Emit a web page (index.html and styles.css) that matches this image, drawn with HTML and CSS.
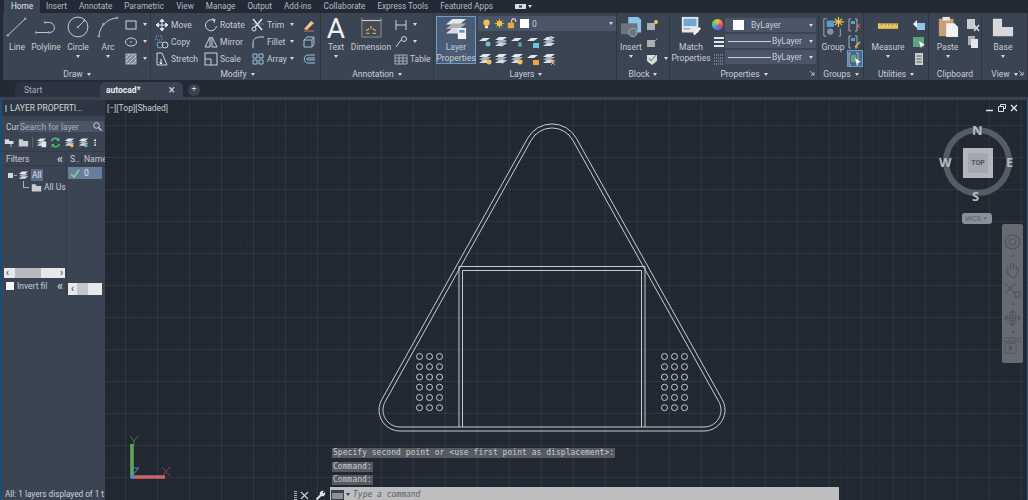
FILE: index.html
```html
<!DOCTYPE html>
<html lang="en">
<head>
<meta charset="utf-8">
<title>AutoCAD</title>
<link rel="stylesheet" href="styles.css">
</head>
<body>
<svg class="sprite" aria-hidden="true">
  <symbol id="stack" viewBox="0 0 14 14"><path d="M1 5 5 2h8L9 5z" fill="#e4e6e8"/><path d="M1 8 5 5h8L9 8z" fill="#aab0b8"/><path d="M1 11 5 8h8L9 11z" fill="#d8dade"/></symbol>
  <symbol id="sheet" viewBox="0 0 14 14"><path d="M1 6 5 3h7L8 6z" fill="#e4e6e8"/></symbol>
  <symbol id="pen" viewBox="0 0 14 14"><path d="M2 11 9 3l3 2-7 7z" fill="#e8c98a"/><path d="M2 13h10" stroke="#e06a5a"/></symbol>
</svg>
<div class="app">
  <nav class="menu">
    <span class="menu-item active">Home</span><span class="menu-item">Insert</span><span class="menu-item">Annotate</span><span class="menu-item">Parametric</span><span class="menu-item">View</span><span class="menu-item">Manage</span><span class="menu-item">Output</span><span class="menu-item">Add-ins</span><span class="menu-item">Collaborate</span><span class="menu-item">Express Tools</span><span class="menu-item">Featured Apps</span>
    <span class="menu-video"><svg width="11" height="5" viewBox="0 0 11 5"><rect width="11" height="5" fill="#d9dce0"/><rect x="4" y="1.500" width="3" height="2" fill="#333"/></svg><i class="caret"></i></span>
  </nav>

  <div class="ribbon">
    <section class="panel p-draw">
      <div class="panel-body">
        <div class="tool w26"><svg class="big" viewBox="0 0 24 24"><path d="M2 21 21 3" stroke="#cfd4da" fill="none"/><circle cx="2" cy="21" r="1.300" fill="#6fb1e0"/><circle cx="21" cy="3" r="1.300" fill="#6fb1e0"/></svg><span>Line</span></div>
        <div class="tool w32"><svg class="big" viewBox="0 0 24 24"><path d="M1 18H16C23 18 23 7 15 7H11" stroke="#cfd4da" fill="none"/><circle cx="1" cy="18" r="1.300" fill="#6fb1e0"/><circle cx="15" cy="18" r="1.300" fill="#6fb1e0"/><circle cx="11" cy="7" r="1.300" fill="#6fb1e0"/></svg><span>Polyline</span></div>
        <div class="tool w32"><svg class="big" viewBox="0 0 24 24"><circle cx="12" cy="12" r="10.800" stroke="#cfd4da" fill="none"/><path d="M12 12 19 5" stroke="#cfd4da"/><circle cx="12" cy="12" r="1.300" fill="#6fb1e0"/><circle cx="19" cy="5" r="1.300" fill="#6fb1e0"/></svg><span>Circle</span><i class="caret"></i></div>
        <div class="tool w28"><svg class="big" viewBox="0 0 24 24"><path d="M2 22C3 11 11 3 22 2" stroke="#cfd4da" fill="none"/><circle cx="2" cy="22" r="1.300" fill="#6fb1e0"/><circle cx="7" cy="9" r="1.300" fill="#6fb1e0"/><circle cx="22" cy="2" r="1.300" fill="#6fb1e0"/></svg><span>Arc</span><i class="caret"></i></div>
        <div class="col col-shapes">
          <div class="st"><svg class="ic" viewBox="0 0 14 14"><rect x="2" y="3" width="10" height="8" fill="none" stroke="#cfd4da"/></svg><i class="caret"></i></div>
          <div class="st"><svg class="ic" viewBox="0 0 14 14"><ellipse cx="7" cy="7" rx="5.500" ry="4" fill="none" stroke="#cfd4da"/><circle cx="7" cy="7" r="1" fill="#6fb1e0"/></svg><i class="caret"></i></div>
          <div class="st"><svg class="ic" viewBox="0 0 14 14"><rect x="2" y="2" width="10" height="10" fill="#7d8794" stroke="#aeb4bc"/><path d="M2 6 6 2M2 10 10 2M4 12 12 4M8 12l4-4" stroke="#dfe2e6" stroke-width=".7"/></svg><i class="caret"></i></div>
        </div>
      </div>
      <h3 class="panel-title">Draw <i class="caret"></i></h3>
    </section>

    <section class="panel p-modify">
      <div class="panel-body">
        <div class="col w49">
          <div class="st"><svg class="ic" viewBox="0 0 14 14"><path d="M7 1v12M1 7h12M7 1 5 3.500h4zM7 13l-2-2.500h4zM1 7l2.500-2v4zM13 7l-2.500-2v4z" stroke="#e2e5e8" fill="#e2e5e8"/></svg><span>Move</span></div>
          <div class="st"><svg class="ic" viewBox="0 0 14 14"><rect x="1" y="1" width="6" height="4" fill="none" stroke="#9aa2ac" stroke-dasharray="1 1"/><circle cx="5" cy="10" r="3" fill="none" stroke="#6fb1e0"/><circle cx="10" cy="10" r="3" fill="none" stroke="#cfd4da"/></svg><span>Copy</span></div>
          <div class="st"><svg class="ic" viewBox="0 0 14 14"><path d="M2 13V1h5l5 12z" fill="none" stroke="#cfd4da"/><path d="M6 7v5M4.500 10.500 6 12l1.500-1.500" stroke="#fff" fill="none"/></svg><span>Stretch</span></div>
        </div>
        <div class="col w47">
          <div class="st"><svg class="ic" viewBox="0 0 14 14"><path d="M10.500 3A5.500 5.500 0 1 0 12.500 8" fill="none" stroke="#cfd4da"/><path d="M8 1l3 .5L10 5" fill="none" stroke="#cfd4da"/></svg><span>Rotate</span></div>
          <div class="st"><svg class="ic" viewBox="0 0 14 14"><path d="M6 2 1 12h5zM8 2l5 10H8z" fill="none" stroke="#cfd4da"/></svg><span>Mirror</span></div>
          <div class="st"><svg class="ic" viewBox="0 0 14 14"><rect x="1" y="1" width="12" height="12" fill="none" stroke="#cfd4da"/><path d="M1 7h6v6" fill="none" stroke="#cfd4da"/></svg><span>Scale</span></div>
        </div>
        <div class="col w51">
          <div class="st"><svg class="ic" viewBox="0 0 14 14"><path d="M2 1 11 12M11 1 4 9" stroke="#e2e5e8" stroke-width="1.500"/><circle cx="3" cy="11" r="2" fill="none" stroke="#e2e5e8"/><path d="M1 6h12" stroke="#6fb1e0" stroke-width=".6"/></svg><span>Trim</span><i class="caret end"></i></div>
          <div class="st"><svg class="ic" viewBox="0 0 14 14"><path d="M2 13V8C2 4 5 2 9 2h4" fill="none" stroke="#cfd4da"/></svg><span>Fillet</span><i class="caret end"></i></div>
          <div class="st"><svg class="ic" viewBox="0 0 14 14"><path d="M2 2h4v4H2zM8 2h4v4H8zM2 8h4v4H2zM8 8h4v4H8z" fill="none" stroke="#9dc3e2"/></svg><span>Array</span><i class="caret end"></i></div>
        </div>
        <div class="col">
          <div class="st"><svg class="ic" viewBox="0 0 14 14"><use href="#pen"/></svg></div>
          <div class="st"><svg class="ic" viewBox="0 0 14 14"><path d="M2 5h8v7H2zM2 5l3-3h7v7l-2 3M10 5l2-3" fill="none" stroke="#9dc3e2"/></svg></div>
          <div class="st"><svg class="ic" viewBox="0 0 14 14"><path d="M13 3H6C1 3 1 11 6 11h7M13 6H6c-2 0-2 2 0 2h7" fill="none" stroke="#9dc3e2"/></svg></div>
        </div>
      </div>
      <h3 class="panel-title">Modify <i class="caret"></i></h3>
    </section>

    <section class="panel p-annotation">
      <div class="panel-body">
        <div class="tool w30"><b class="text-glyph">A</b><span>Text</span><i class="caret"></i></div>
        <div class="tool w40"><svg class="big" viewBox="0 0 24 24"><path d="M2 2v21h21V2" fill="#454c56" stroke="#8e949c"/><path d="M2 5h21" stroke="#e4e6e8"/><path d="M7 16l3-2M12 14v-3M17 16l-3-2M7 19h3M14 19h3" stroke="#e8b94a" stroke-width="1.300"/></svg><span>Dimension</span></div>
        <div class="col col-annot">
          <div class="st"><svg class="ic" viewBox="0 0 14 14"><path d="M2 2v10M12 2v10M2 7h10" stroke="#cfd4da" fill="none"/></svg><i class="caret"></i></div>
          <div class="st"><svg class="ic" viewBox="0 0 14 14"><path d="M2 12 7 5" stroke="#cfd4da"/><circle cx="10" cy="4" r="2.500" fill="none" stroke="#cfd4da"/></svg><i class="caret"></i></div>
          <div class="st"><svg class="ic" viewBox="0 0 14 14"><path d="M1 3h12v9H1zM1 6h12M1 9h12M5 3v9M9 3v9" fill="none" stroke="#aab0b8"/></svg><span>Table</span></div>
        </div>
      </div>
      <h3 class="panel-title">Annotation <i class="caret"></i></h3>
    </section>

    <section class="panel p-layers">
      <div class="panel-body">
        <div class="tool lp"><svg class="big" viewBox="0 0 24 24"><path d="M1 7 8 1h15l-7 6z" fill="#e4e6e8"/><path d="M1 12 8 6h15l-7 6z" fill="#aab0b8"/><path d="M1 17l7-6h15l-7 6z" fill="#d8dade"/><rect x="14" y="11" width="9" height="12" fill="#f2f3f4"/><rect x="15.500" y="13" width="6" height="3" fill="#5a9bd0"/></svg><span>Layer</span><span>Properties</span></div>
        <div class="layer-tools">
          <div class="combo c-layer">
            <svg class="ic" viewBox="0 0 14 14"><circle cx="7" cy="6" r="4" fill="#f2c14e"/><rect x="5" y="10" width="4" height="3" fill="#e8e8e8"/></svg>
            <svg class="ic" viewBox="0 0 14 14"><circle cx="7" cy="7" r="3.500" fill="#f2c14e"/><path d="M7 1v12M1 7h12M3 3l8 8M11 3l-8 8" stroke="#f2c14e"/></svg>
            <svg class="ic" viewBox="0 0 14 14"><rect x="1" y="6" width="8" height="7" fill="#eba63c"/><path d="M6 6V3.500a2.500 2.500 0 0 1 5 0V5" fill="none" stroke="#f2f2f2" stroke-width="1.300"/></svg>
            <i class="swatch"></i><span>0</span><i class="caret end"></i>
          </div>
          <div class="icon-row">
            <svg class="ic" viewBox="0 0 14 14"><use href="#sheet"/><circle cx="10" cy="9" r="2.500" fill="#6bc6d8"/></svg>
            <svg class="ic" viewBox="0 0 14 14"><use href="#stack"/><path d="M7 12l5-6" stroke="#6fb1e0"/></svg>
            <svg class="ic" viewBox="0 0 14 14"><use href="#sheet"/><path d="M10 7v5M8 8l4 3M12 8l-4 3" stroke="#6bc6d8"/></svg>
            <svg class="ic" viewBox="0 0 14 14"><use href="#sheet"/><rect x="7" y="8" width="6" height="5" fill="#6bc6d8"/></svg>
            <svg class="ic" viewBox="0 0 14 14"><use href="#stack"/><circle cx="9" cy="3" r="2" fill="#9dc3e2"/></svg>
          </div>
          <div class="icon-row">
            <svg class="ic" viewBox="0 0 14 14"><use href="#stack"/><circle cx="11" cy="10" r="2.500" fill="#f2c14e"/></svg>
            <svg class="ic" viewBox="0 0 14 14"><use href="#stack"/><path d="M8 12l5-4" stroke="#6fb1e0"/></svg>
            <svg class="ic" viewBox="0 0 14 14"><use href="#stack"/><circle cx="10" cy="10" r="2.500" fill="#f2c14e"/></svg>
            <svg class="ic" viewBox="0 0 14 14"><use href="#sheet"/><rect x="7" y="8" width="6" height="5" fill="#eba63c"/></svg>
            <svg class="ic" viewBox="0 0 14 14"><use href="#stack"/><path d="M9 9l4 4M13 9l-4 4" stroke="#eba63c"/></svg>
          </div>
        </div>
      </div>
      <h3 class="panel-title">Layers <i class="caret"></i></h3>
    </section>

    <section class="panel p-block">
      <div class="panel-body">
        <div class="tool w28"><svg class="big" viewBox="0 0 24 24"><path d="M9 1h11l3 3v14H9z" fill="#8cc4ec"/><rect x="1" y="8" width="18" height="12" fill="#6d747e"/><circle cx="14" cy="18" r="4.500" fill="#6d747e" stroke="#aab0b8"/></svg><span>Insert</span><i class="caret"></i></div>
        <div class="col">
          <div class="st"><svg class="ic" viewBox="0 0 14 14"><rect x="2" y="5" width="8" height="7" fill="#aab0b8"/><circle cx="11" cy="4" r="2" fill="#f2c14e"/></svg></div>
          <div class="st"><svg class="ic" viewBox="0 0 14 14"><rect x="2" y="5" width="8" height="7" fill="#aab0b8"/><path d="M9 7l4-4" stroke="#e06a5a"/></svg></div>
          <div class="st"><svg class="ic" viewBox="0 0 14 14"><path d="M2 3h10v6l-5 4-5-4z" fill="#d8dade"/><path d="M4 6l2 3 5-6" stroke="#4a8f5a" fill="none"/></svg><i class="caret"></i></div>
        </div>
      </div>
      <h3 class="panel-title">Block <i class="caret"></i></h3>
    </section>

    <section class="panel p-props">
      <div class="panel-body">
        <div class="tool w42"><svg class="big" viewBox="0 0 24 24"><rect x="2" y="1" width="18" height="17" fill="#e4e6e8"/><rect x="4" y="3" width="14" height="8" fill="#6ea9d6"/><path d="M4 14h7" stroke="#888"/><path d="M14 19l7-7 2 2-7 7z" fill="#f2f2f2"/></svg><span>Match</span><span>Properties</span></div>
        <div class="col prop-icons">
          <div class="st"><i class="wheel"></i></div>
          <div class="st"><svg class="ic" viewBox="0 0 14 14"><path d="M2 3h10M2 7h10M2 11h10" stroke="#e2e5e8" stroke-width="2"/></svg></div>
          <div class="st"><svg class="ic" viewBox="0 0 14 14"><path d="M2 3h10M2 6h10M2 9h10M2 12h10" stroke="#aab0b8" stroke-dasharray="1 1"/></svg></div>
        </div>
        <div class="combos">
          <div class="combo c-prop"><i class="swatch wide"></i><span>ByLayer</span><i class="caret end"></i></div>
          <div class="combo c-prop"><i class="rule"></i><span>ByLayer</span><i class="caret end"></i></div>
          <div class="combo c-prop"><i class="rule"></i><span>ByLayer</span><i class="caret end"></i></div>
        </div>
      </div>
      <h3 class="panel-title">Properties <i class="caret"></i></h3>
      <svg class="launch" width="5" height="5" viewBox="0 0 5 5"><path d="M0 0l4 4M4 1v3H1" fill="none" stroke="#b4bac2"/></svg>
    </section>

    <section class="panel p-groups">
      <div class="panel-body">
        <div class="tool w28"><svg class="big" viewBox="0 0 24 24"><path d="M5 3H2v19h3M18 22h2v-8" fill="none" stroke="#aab0b8"/><rect x="5" y="5" width="8" height="7" fill="#5a9bd0"/><circle cx="9" cy="17" r="3.500" fill="#8a9099"/><path d="M18 1v11M13 6.500h11M14 3l8 7M22 3l-8 7" stroke="#f2c14e" stroke-width="1.300"/></svg><span>Group</span></div>
        <div class="col">
          <div class="st"><svg class="ic" viewBox="0 0 14 14"><path d="M4 1H2v12h2M8 1h2v12H8" fill="none" stroke="#aab0b8"/><rect x="4" y="3" width="4" height="3" fill="#5a9bd0"/><path d="M9 6l4 4M13 6l-4 4" stroke="#e06a5a"/></svg></div>
          <div class="st"><svg class="ic" viewBox="0 0 14 14"><path d="M4 1H2v12h2M8 1h2v12H8" fill="none" stroke="#aab0b8"/><rect x="4" y="3" width="4" height="3" fill="#5a9bd0"/><path d="M8 12l5-5" stroke="#e8b94a" stroke-width="1.500"/></svg></div>
          <div class="st sel"><svg class="ic" viewBox="0 0 14 14"><path d="M3 1H1v12h2M8 1h2v12H8" fill="none" stroke="#aab0b8"/><rect x="3" y="3" width="5" height="7" fill="#5fa27c"/><path d="M7 6l6 4-3 .5-1 3z" fill="#fff"/></svg></div>
        </div>
      </div>
      <h3 class="panel-title">Groups <i class="caret"></i></h3>
    </section>

    <section class="panel p-util">
      <div class="panel-body">
        <div class="tool w48"><svg class="big" viewBox="0 0 24 24"><rect x="1" y="8" width="22" height="6" fill="#e8c265"/><path d="M5 8v2M9 8v2M13 8v2M17 8v2M21 8v2" stroke="#8a6d2a"/></svg><span>Measure</span><i class="caret"></i></div>
        <div class="col">
          <div class="st"><svg class="ic" viewBox="0 0 14 14"><rect x="5" y="5" width="8" height="7" fill="#8cc4ec"/><path d="M1 6l4-4v8z" fill="#f2f2f2"/></svg></div>
          <div class="st"><svg class="ic" viewBox="0 0 14 14"><rect x="1" y="2" width="11" height="10" fill="#5fa27c"/><path d="M7 6l6 4-3 .5-1 3z" fill="#fff"/></svg></div>
          <div class="st"><svg class="ic" viewBox="0 0 14 14"><rect x="3" y="1" width="8" height="12" fill="#c9ccd0"/><path d="M4.500 4h5M4.500 7h5M4.500 10h5" stroke="#555"/></svg></div>
        </div>
      </div>
      <h3 class="panel-title">Utilities <i class="caret"></i></h3>
    </section>

    <section class="panel p-clip">
      <div class="panel-body">
        <div class="tool w37"><svg class="big" viewBox="0 0 24 24"><rect x="2" y="3" width="16" height="19" fill="#c79f72"/><rect x="6" y="1" width="8" height="4" fill="#e6e8ea"/><path d="M10 8h9l4 4v11H10z" fill="#f1f2f3"/></svg><span>Paste</span><i class="caret"></i></div>
        <div class="col">
          <div class="st"><svg class="ic" viewBox="0 0 14 14"><rect x="1" y="1" width="8" height="10" fill="#c9ccd0"/><path d="M8 7l5 6M13 7l-5 6" stroke="#e2e5e8" stroke-width="1.300"/></svg></div>
          <div class="st"><svg class="ic" viewBox="0 0 14 14"><rect x="2" y="1" width="7" height="9" fill="#aab0b8"/><rect x="5" y="4" width="7" height="9" fill="#e4e6e8"/></svg></div>
        </div>
      </div>
      <h3 class="panel-title">Clipboard</h3>
    </section>

    <section class="panel p-view">
      <div class="panel-body">
        <div class="tool w42"><svg class="big" viewBox="0 0 24 24"><path d="M1 3h10v9h12v10H1z" fill="#d8d8d8"/></svg><span>Base</span><i class="caret"></i></div>
      </div>
      <h3 class="panel-title">View <i class="caret"></i></h3>
      <svg class="launch" width="5" height="5" viewBox="0 0 5 5"><path d="M0 0l4 4M4 1v3H1" fill="none" stroke="#b4bac2"/></svg>
    </section>
  </div>

  <div class="tabs">
    <span class="tab tab-start">Start</span>
    <span class="tab tab-active"><b>autocad*</b><em>×</em></span>
    <span class="tab-add">+</span>
  </div>

  <main class="workspace">
    <aside class="palette">
      <header class="pal-head"><i class="grip"></i>LAYER PROPERTI...</header>
      <div class="pal-search"><span>Cur</span><div class="search"><span>Search for layer</span><svg width="9" height="9" viewBox="0 0 9 9"><circle cx="3.500" cy="3.500" r="2.800" fill="none" stroke="#cfd4da"/><path d="M5.500 5.500 8.500 8.500" stroke="#cfd4da" stroke-width="1.300"/></svg></div></div>
      <div class="pal-tools">
        <svg class="ic" viewBox="0 0 14 14"><path d="M1 3h5l1 2h5v4H1z" fill="#d8dade"/><path d="M9 8v5" stroke="#d8dade"/></svg>
        <svg class="ic" viewBox="0 0 14 14"><path d="M1 3h5l1 2h6v7H1z" fill="#c9ccd0"/></svg>
        <i class="pal-sep"></i>
        <svg class="ic" viewBox="0 0 14 14"><use href="#stack"/><rect x="7" y="6" width="6" height="7" fill="#e4e6e8"/></svg>
        <svg class="ic" viewBox="0 0 14 14"><path d="M2 5a5 5 0 0 1 9-1M12 9a5 5 0 0 1-9 1" fill="none" stroke="#46c07a" stroke-width="2"/><path d="M12 1v4H8M2 13V9h4" fill="#46c07a"/></svg>
        <svg class="ic" viewBox="0 0 14 14"><use href="#stack"/><circle cx="10" cy="11" r="2.200" fill="#f2c14e"/></svg>
        <svg class="ic" viewBox="0 0 14 14"><use href="#stack"/><circle cx="10" cy="11" r="2.200" fill="#6fb1e0"/></svg>
        <svg class="ic clip" viewBox="0 0 4 14"><use href="#stack" width="14" height="14"/></svg>
      </div>
      <div class="panes">
        <div class="pane-filters">
          <div class="pane-head"><span>Filters</span><b>«</b></div>
          <div class="tree">
            <div class="tree-row"><i class="minus"></i><i class="dash"></i><svg class="ic small" viewBox="0 0 14 14"><use href="#stack"/></svg><span class="tree-sel">All</span></div>
            <div class="tree-row sub"><i class="elbow"></i><svg class="ic small" viewBox="0 0 14 14"><path d="M1 3h5l1 2h6v7H1z" fill="#c9ccd0"/></svg><span>All Use</span></div>
          </div>
          <div class="scroll"><span>‹</span><i></i><span>›</span></div>
          <div class="invert"><i class="check"></i><span>Invert fil</span><b>«</b></div>
        </div>
        <div class="pane-list">
          <div class="list-head"><span class="col-s">S..</span><span>Name</span></div>
          <div class="list-row"><svg width="10" height="9" viewBox="0 0 10 9"><path d="M1 5l3 3 5-7" fill="none" stroke="#6fdc8c" stroke-width="1.600"/></svg><span>0</span></div>
          <div class="scroll short"><span>‹</span><i></i></div>
        </div>
      </div>
      <footer class="pal-foot">All: 1 layers displayed of 1 t</footer>
    </aside>

    <section class="viewport">
      <svg class="drawing" viewBox="0 0 923 400" width="923" height="400" aria-hidden="true">
        <g transform="translate(-105 -100)" fill="none" stroke="#c8ccd1" stroke-width="1">
          <path d="M400 431H704A21 21 0 0 0 722.300 399.750L576.300 138.200A27.800 27.800 0 0 0 527.700 138.200L381.700 399.750A21 21 0 0 0 400 431Z"/>
          <path d="M400 427H704A17 17 0 0 0 718.840 401.700L572.800 140.200A23.800 23.800 0 0 0 531.200 140.200L385.160 401.700A17 17 0 0 0 400 427Z"/>
          <path d="M459 427V266.500H645V427M462.500 427V270.500H641.500V427"/>
          <g id="dots">
            <circle cx="419.500" cy="356.500" r="3"/><circle cx="429.500" cy="356.500" r="3"/><circle cx="439.500" cy="356.500" r="3"/>
            <circle cx="419.500" cy="366.700" r="3"/><circle cx="429.500" cy="366.700" r="3"/><circle cx="439.500" cy="366.700" r="3"/>
            <circle cx="419.500" cy="377" r="3"/><circle cx="429.500" cy="377" r="3"/><circle cx="439.500" cy="377" r="3"/>
            <circle cx="419.500" cy="387.200" r="3"/><circle cx="429.500" cy="387.200" r="3"/><circle cx="439.500" cy="387.200" r="3"/>
            <circle cx="419.500" cy="397.500" r="3"/><circle cx="429.500" cy="397.500" r="3"/><circle cx="439.500" cy="397.500" r="3"/>
            <circle cx="419.500" cy="407.700" r="3"/><circle cx="429.500" cy="407.700" r="3"/><circle cx="439.500" cy="407.700" r="3"/>
          </g>
          <use href="#dots" transform="translate(245 0)"/>
        </g>
        <g transform="translate(-105 -100)">
          <path d="M132 477V444" stroke="#62a85a" stroke-width="3.500"/>
          <path d="M132 477H165" stroke="#c9686a" stroke-width="3.500"/>
          <path d="M132 477 138 468M133 468h6" stroke="#3f8fd0" fill="none"/>
          <circle cx="132" cy="477" r="2" fill="#3f8fd0"/>
          <path d="M130 436l4 5 4-5M134 441v5" stroke="#3f7a3e" fill="none"/>
          <path d="M162 467l8 9M170 467l-8 9" stroke="#8a3f40"/>
        </g>
      </svg>

      <span class="vp-label">[−][Top][Shaded]</span>
      <div class="win-ctrl">
        <svg width="8" height="8" viewBox="0 0 8 8"><path d="M0 6.500h7" stroke="#dfe2e6" stroke-width="1.500"/></svg>
        <svg width="8" height="8" viewBox="0 0 8 8"><path d="M2.500 2.500V.5h5v4h-2M.5 2.500h5v5h-5z" fill="none" stroke="#dfe2e6"/></svg>
        <svg width="8" height="8" viewBox="0 0 8 8"><path d="M1 1l6 6M7 1 1 7" stroke="#dfe2e6" stroke-width="1.400"/></svg>
      </div>

      <div class="viewcube">
        <i class="ring"></i>
        <b class="dir n">N</b><b class="dir s">S</b><b class="dir w">W</b><b class="dir e">E</b>
        <div class="cube"><span>TOP</span></div>
      </div>
      <div class="wcs">WCS <i class="caret"></i></div>

      <div class="navbar">
        <svg class="nav-ic" viewBox="0 0 20 18"><circle cx="10" cy="9" r="7.500" fill="none" stroke="#50555b" stroke-width="1.500"/><circle cx="10" cy="9" r="3.500" fill="none" stroke="#50555b"/></svg>
        <i class="nav-dot"></i>
        <svg class="nav-ic" viewBox="0 0 20 18"><path d="M5 9V5M8 8V2M11 8V2M14 9V4M5 9c0 4 2 7 5 8 4 0 6-4 6-10M2 10l3 2" fill="none" stroke="#50555b" stroke-width="1.200"/></svg>
        <svg class="nav-ic tight" viewBox="0 0 20 18"><path d="M2 2 13 13M13 2 2 13" stroke="#50555b" stroke-width="1.200"/><circle cx="15" cy="14" r="3" fill="none" stroke="#50555b" stroke-width="1.200"/></svg>
        <i class="nav-dot"></i>
        <svg class="nav-ic" viewBox="0 0 20 18"><path d="M10 1v16M2 9h16M7 4l3-3 3 3M7 14l3 3 3-3M5 6 2 9l3 3M15 6l3 3-3 3" fill="none" stroke="#50555b" stroke-width="1.200"/><rect x="7" y="6" width="6" height="6" fill="none" stroke="#50555b"/></svg>
        <i class="nav-dot"></i>
        <svg class="nav-ic" viewBox="0 0 20 20"><path d="M1 1h5v4H1zM8 1h5v4H8zM15 1h4v4h-4zM2 7h12v11H2z" fill="none" stroke="#50555b"/><path d="M6 9l5 3.500L6 16z" fill="#50555b"/></svg>
      </div>

      <div class="cmd-history">
        <p>Specify second point or &lt;use first point as displacement&gt;:</p>
        <p>Command:</p>
        <p>Command:</p>
      </div>
      <div class="cmd-bar">
        <div class="cmd-tools">
          <i class="cmd-grip"></i>
          <svg width="9" height="9" viewBox="0 0 9 9"><path d="M1 1l7 7M8 1 1 8" stroke="#c9ccd0" stroke-width="1.200"/></svg>
          <svg class="wrench" width="11" height="11" viewBox="0 0 11 11"><path d="M1.500 9.500 6.500 4.500" stroke="#e2e5e8" stroke-width="2" fill="none"/><path d="M5 5a3 3 0 0 1 4-4L7.500 2.500 8.500 3.500 10 2a3 3 0 0 1-4 4z" fill="#e2e5e8"/></svg>
        </div>
        <div class="cmd-input">
          <svg width="13" height="10" viewBox="0 0 13 10"><rect x=".5" y=".5" width="12" height="9" fill="#8d9096" stroke="#3b4048"/><rect x="1" y="1" width="11" height="2" fill="#3b4048"/></svg>
          <i class="caret dark"></i>
          <span>Type a command</span>
        </div>
      </div>
    </section>
  </main>
</div>
</body>
</html>
```
FILE: styles.css
```css
* { box-sizing: border-box; }
html, body { margin: 0; height: 100%; overflow: hidden; }
body { font-family: Roboto, "Liberation Sans", sans-serif; font-size: 8.500px; color: #c9cdd3; background: #232a36; }
.sprite { display: none; }
.app { width: 1028px; height: 500px; display: flex; flex-direction: column; }
i, b, em { font-style: normal; }

.caret { display: inline-block; width: 0; height: 0; border-left: 2.500px solid transparent; border-right: 2.500px solid transparent; border-top: 3px solid #d5d8dc; }
.caret.dark { border-top-color: #3b4048; }
.caret.end { margin-left: auto; }

.menu { height: 13px; display: flex; align-items: stretch; padding-left: 4px; background: #232a36; font-size: 8.200px; }
.menu-item { padding: 0 6px; line-height: 13px; color: #b4bac2; white-space: nowrap; }
.menu-item.active { padding: 0 7px; background: #3b4453; color: #e4e7ea; }
.menu-video { display: flex; align-items: center; gap: 2px; margin-left: 16px; }

.ribbon { height: 67px; display: flex; background: #3b4453; border-left: 3px solid #232a36; padding-left: 1px; }
.panel { position: relative; display: flex; flex-direction: column; border-right: 1px solid #2f3744; flex: none; }
.panel-body { height: 54px; display: flex; padding-top: 3px; }
.panel-title { margin: 0; flex: 1; display: flex; align-items: center; justify-content: center; gap: 4px; font: inherit; color: #c9cdd3; padding-top: 1px; }
.launch { position: absolute; right: 3px; bottom: 4px; }

.p-draw { width: 147px; }
.p-modify { width: 170px; padding-left: 4px; }
.p-annotation { width: 113px; }
.p-layers { width: 183px; padding-left: 2px; }
.p-block { width: 53px; }
.p-props { width: 149px; }
.p-groups { width: 45px; }
.p-util { width: 65px; }
.p-clip { width: 53px; }
.p-view { width: 46px; }

.tool { display: flex; flex-direction: column; align-items: center; flex: none; line-height: 11px; }
.tool span { white-space: nowrap; }
.tool .caret { margin-top: 2px; }
.big { width: 22px; height: 22px; margin-bottom: 4px; display: block; flex: none; }
.text-glyph { height: 26px; font-size: 28px; line-height: 26px; font-weight: 400; color: #eef0f2; }
.w26 { width: 26px; } .w28 { width: 28px; } .w30 { width: 30px; } .w32 { width: 32px; } .w37 { width: 37px; } .w40 { width: 40px; } .w42 { width: 42px; }
.w47 { width: 47px; } .w48 { width: 48px; } .w49 { width: 49px; } .w51 { width: 51px; }

.col { display: flex; flex-direction: column; flex: none; }
.col-shapes { width: 26px; padding-left: 2px; }
.col-annot { padding-left: 3px; }
.st { height: 17px; display: flex; align-items: center; gap: 2px; white-space: nowrap; }
.st .caret { margin-left: 3px; }
.st .caret.end { margin-left: auto; margin-right: 8px; }
.st.sel { background: #4a6a8c; border: 1px solid #6a9ccc; }
.ic { width: 14px; height: 14px; flex: none; display: block; }
.ic.small { width: 11px; height: 11px; }
.ic.clip { width: 4px; }

.lp { width: 40px; height: 48px; background: #4a5c74; border: 1px solid #6a9ccc; margin-right: 2px; }
.lp .big { margin-bottom: 1px; height: 24px; }
.layer-tools { display: flex; flex-direction: column; width: 139px; }
.icon-row { height: 17px; display: flex; align-items: center; gap: 2px; }
.combo { display: flex; align-items: center; background: #4a5568; padding: 0 3px; }
.c-layer { height: 15px; gap: 2px; margin-bottom: 2px; }
.c-layer .ic { width: 11px; height: 11px; }
.c-layer .swatch { margin-right: 1px; }
.c-prop { height: 14px; width: 91px; margin-bottom: 2px; gap: 4px; }
.swatch { width: 9px; height: 9px; background: #fff; flex: none; display: block; }
.swatch.wide { width: 11px; height: 10px; margin: 0 3px 0 5px; }
.rule { width: 43px; height: 1px; margin-right: -3px; background: #cfd4da; flex: none; display: block; }
.combos { display: flex; flex-direction: column; padding-top: 2px; }
.prop-icons { width: 13px; }
.wheel { width: 11px; height: 11px; border-radius: 50%; display: block; background: conic-gradient(#e8c23c, #e88a3c, #d9487a, #8a5ad0, #4a8ad8, #4ac0a0, #8ad04a, #e8c23c); }

.tabs { height: 20px; display: flex; align-items: flex-end; padding-left: 15px; background: #232a36; border-bottom: 3px solid #3a4250; }
.tab { height: 15px; line-height: 15px; display: flex; align-items: center; justify-content: space-between; padding-top: 1px; }
.tab-start { width: 85px; background: #2b3340; padding-left: 9px; color: #a9afb8; border-top-left-radius: 6px; }
.tab-active { width: 83px; background: #3a4250; padding: 1px 8px 0 6px; border-radius: 5px 5px 0 0; }
.tab-active b { font-weight: 700; color: #e8eaec; }
.tab-active em { font-size: 12px; color: #d5d8dc; }
.tab-add { width: 12px; height: 12px; margin: 0 0 1px 5px; border-radius: 50%; background: #3a4250; text-align: center; line-height: 11px; color: #d5d8dc; }

.workspace { flex: 1; display: flex; min-height: 0; }
.palette { width: 105px; flex: none; display: flex; flex-direction: column; background: #3b4453; border-left: 2px solid #174f78; }
.pal-head { height: 16px; line-height: 16px; padding-left: 3px; background: #2e3643; color: #d5d8dc; display: flex; align-items: center; gap: 3px; white-space: nowrap; }
.grip { width: 2px; height: 7px; background: #7c8490; display: block; }
.pal-search { height: 18px; display: flex; align-items: center; padding: 3px 0 0 4px; overflow: hidden; }
.pal-search > span { width: 13px; flex: none; overflow: hidden; }
.search { flex: 1; height: 11px; margin-right: 1px; background: #4a5568; display: flex; align-items: center; justify-content: space-between; padding: 0 2px 0 1px; color: #a9afb8; }
.pal-tools { height: 17px; display: flex; align-items: center; gap: 3px; padding-left: 2px; overflow: hidden; }
.pal-tools .ic { width: 11px; height: 11px; }
.pal-tools .ic.clip { width: 4px; }
.pal-sep { width: 1px; height: 11px; background: #5a6372; display: block; flex: none; }
.panes { display: flex; height: 146px; }
.pane-filters { width: 65px; display: flex; flex-direction: column; border-right: 1px solid #333b48; flex: none; }
.pane-head { height: 15px; display: flex; justify-content: space-between; align-items: center; padding: 0 3px 0 4px; border-top: 1px solid #333b48; border-bottom: 1px solid #333b48; }
.pane-head b, .invert b { font-size: 12px; line-height: 10px; font-weight: 700; }
.tree { flex: 1; padding: 3px 0 0 6px; }
.tree-row { height: 12px; display: flex; align-items: center; gap: 1px; white-space: nowrap; overflow: hidden; }
.tree-row.sub { padding-left: 15px; gap: 2px; }
.tree-sel { background: #5a6b86; padding: 0 1px; margin-left: 1px; line-height: 12px; color: #dfe2e6; }
.minus { width: 5px; height: 5px; background: #d5d8dc; display: block; flex: none; }
.dash { width: 3px; height: 1px; background: #aab0b8; display: block; flex: none; }
.elbow { width: 6px; height: 8px; margin-top: -7px; border-left: 1px solid #aab0b8; border-bottom: 1px solid #aab0b8; display: block; flex: none; }
.scroll { height: 10px; display: flex; align-items: center; background: #e6e8ea; color: #333; margin: 0 1px 0 2px; padding: 0 2px; line-height: 10px; font-size: 10px; }
.scroll i { width: 26px; height: 10px; background: #b6babf; display: block; margin: 0 auto 0 6px; }
.scroll.short { margin: auto 0 2px 0; width: 34px; height: 12px; padding: 0 0 0 3px; }
.scroll.short i { width: 11px; height: 12px; margin: 0 0 0 3px; background: #c4c8cc; }
.invert { height: 16px; margin-bottom: 3px; display: flex; align-items: center; gap: 3px; padding: 0 3px 0 4px; white-space: nowrap; }
.invert b { margin-left: auto; }
.check { width: 8px; height: 8px; background: #f4f5f6; display: block; flex: none; }
.pane-list { flex: 1; display: flex; flex-direction: column; min-width: 0; overflow: hidden; padding-left: 1px; }
.list-head { height: 15px; display: flex; align-items: center; white-space: nowrap; border-top: 1px solid #333b48; border-bottom: 1px solid #333b48; overflow: hidden; }
.col-s { width: 14px; padding-left: 2px; border-right: 1px solid #333b48; margin-right: 2px; flex: none; }
.list-row { width: 34px; height: 12px; margin-top: 1px; background: #6a7d9c; display: flex; align-items: center; gap: 4px; padding-left: 2px; color: #e4e7ea; }
.pal-foot { margin-top: auto; height: 13px; padding: 1px 0 0 3px; font-size: 8.200px; line-height: 12px; white-space: nowrap; overflow: hidden; color: #d0d4d9; }

.viewport {
  position: relative; flex: 1; overflow: hidden; background-color: #212831;
  background-image:
    linear-gradient(rgba(255,255,255,.05) 1px, transparent 1px),
    linear-gradient(90deg, rgba(255,255,255,.05) 1px, transparent 1px),
    linear-gradient(rgba(255,255,255,.012) 1px, transparent 1px),
    linear-gradient(90deg, rgba(255,255,255,.012) 1px, transparent 1px);
  background-size: 32px 32px, 32px 32px, 6.400px 6.400px, 6.400px 6.400px;
  background-position: 20px 25px, 20px 25px, 20px 25px, 20px 25px;
  border-right: 1px solid #3d5a70;
}
.drawing { position: absolute; left: 0; top: 0; display: block; }
.vp-label { position: absolute; left: 2px; top: 3px; color: #c9cdd3; line-height: 11px; }
.win-ctrl { position: absolute; right: 9px; top: 4px; display: flex; gap: 4px; }
.viewcube { position: absolute; left: 831px; top: 23px; width: 82px; height: 78px; }
.ring { position: absolute; left: 7px; top: 4px; width: 69px; height: 69px; border-radius: 50%; border: 6px solid #565c66; display: block; }
.dir { position: absolute; font-size: 13px; line-height: 14px; font-weight: 700; color: #b7bbc0; font-family: "Open Sans", sans-serif; }
.dir.n { left: 36px; top: 0; } .dir.s { left: 36px; top: 66px; } .dir.w { left: 3px; top: 32px; } .dir.e { left: 70px; top: 32px; }
.cube { position: absolute; left: 27px; top: 25px; width: 30px; height: 30px; background: #b4b7b9; display: flex; align-items: center; justify-content: center; }
.cube span { width: 20px; height: 20px; background: #a4a8ae; color: #4c5058; font-size: 7px; font-weight: 700; line-height: 20px; text-align: center; }
.wcs { position: absolute; left: 857px; top: 113px; width: 30px; height: 11px; border-radius: 3px; background: #8a8f9c; color: #5a5f6a; font-size: 7.500px; line-height: 11px; padding-left: 3px; display: flex; align-items: center; gap: 2px; }
.wcs .caret { border-top-color: #6a6f7a; }
.navbar { position: absolute; left: 897px; top: 124px; width: 21px; height: 139px; border-radius: 2px; background: #666b72; display: flex; flex-direction: column; align-items: center; gap: 4px; padding-top: 9px; }
.nav-ic { width: 19px; height: 18px; display: block; flex: none; }
.nav-ic.tight { margin-top: -2px; }
.nav-dot { width: 2px; height: 2px; background: #50555b; display: block; flex: none; }

.cmd-history { position: absolute; left: 227px; top: 348px; font-family: "DejaVu Sans Mono", "Liberation Mono", monospace; font-size: 8px; letter-spacing: .03px; color: #c9ccce; display: flex; flex-direction: column; align-items: flex-start; gap: 3.500px; }
.cmd-history p { margin: 0; height: 10px; line-height: 10px; padding: 0 1px; background: #565b61; white-space: nowrap; }
.cmd-bar { position: absolute; left: 187px; bottom: 0; display: flex; align-items: center; height: 13px; }
.cmd-tools { width: 38px; display: flex; align-items: center; gap: 3px; padding: 3px 0 0 2px; }
.wrench { margin-left: 3px; }
.cmd-grip { width: 3px; height: 9px; display: block; background-image: linear-gradient(#aeb2b8 1px, transparent 1px); background-size: 3px 2px; }
.cmd-input { width: 509px; height: 13px; background: #bcbec0; display: flex; align-items: center; gap: 2px; padding: 2px 0 0 1px; }
.cmd-input span { font-family: "DejaVu Sans Mono", "Liberation Mono", monospace; font-style: italic; font-size: 8px; color: #5c6066; margin-left: 1px; white-space: nowrap; }
```
